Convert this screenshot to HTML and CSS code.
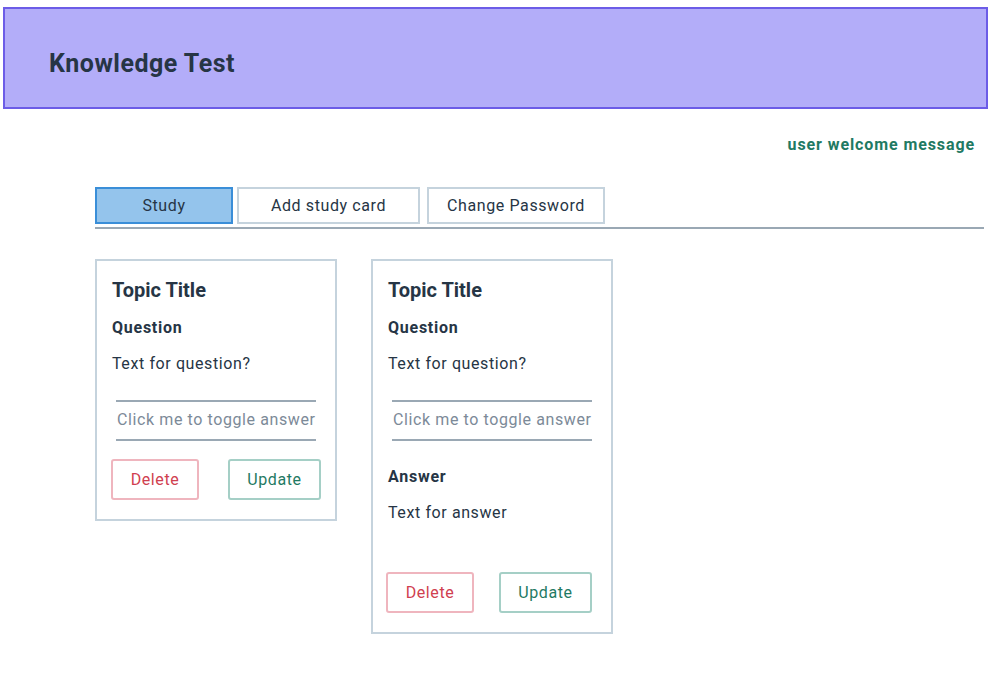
FILE: index.html
```html
<!DOCTYPE html>
<html>
<head>
<meta charset="utf-8">
<link rel="stylesheet" href="styles.css">
</head>
<body>
<header class="app-header">
  <h1 class="app-title">Knowledge Test</h1>
</header>
<div class="welcome-row">
  <span class="welcome">user welcome message</span>
</div>
<main class="main">
  <nav class="tabs">
    <button class="tab tab-active">Study</button>
    <button class="tab tab-add">Add study card</button>
    <button class="tab tab-pass">Change Password</button>
  </nav>
  <section class="cards">
    <article class="card">
      <h2 class="card-title">Topic Title</h2>
      <h3 class="label">Question</h3>
      <p class="text">Text for question?</p>
      <div class="toggle">Click me to toggle answer</div>
      <div class="actions">
        <button class="btn btn-delete">Delete</button>
        <button class="btn btn-update">Update</button>
      </div>
    </article>
    <article class="card">
      <h2 class="card-title">Topic Title</h2>
      <h3 class="label">Question</h3>
      <p class="text">Text for question?</p>
      <div class="toggle">Click me to toggle answer</div>
      <h3 class="label label-answer">Answer</h3>
      <p class="text">Text for answer</p>
      <div class="actions actions-answer">
        <button class="btn btn-delete">Delete</button>
        <button class="btn btn-update">Update</button>
      </div>
    </article>
  </section>
</main>
</body>
</html>
```
FILE: styles.css
```css
* { box-sizing: border-box; }
body {
  margin: 0;
  padding: 7px 16px 0 3px;
  font-family: Roboto, "Noto Sans", sans-serif;
  color: #263545;
  background: #fff;
  letter-spacing: 0.6px;
}
.app-header {
  height: 102px;
  background: #b3adf9;
  border: 2px solid #6c5ce7;
  display: flex;
  align-items: center;
  padding-left: 44px;
}
.app-title {
  margin: 0;
  font-size: 25px;
  font-weight: 700;
  line-height: 30px;
  letter-spacing: 0.5px;
  color: #263545;
  padding-top: 12px;
}
.welcome-row {
  display: flex;
  justify-content: flex-end;
  padding-right: 13px;
  margin-top: 26px;
  height: 20px;
}
.welcome {
  font-size: 16px;
  font-weight: 700;
  color: #1f7a63;
  line-height: 20px;
  letter-spacing: 0.9px;
}
.main {
  margin-left: 92px;
  margin-top: 32px;
}
.tabs {
  display: flex;
  gap: 5px;
  border-bottom: 2px solid #9aa8b4;
  padding-bottom: 3px;
  margin-right: 4px;
}
.tab {
  height: 37px;
  font-family: inherit;
  font-size: 16px;
  letter-spacing: 0.6px;
  color: #263545;
  background: #fff;
  border: 2px solid #c5d3dd;
  padding: 0;
}
.tab-active {
  width: 138px;
  background: #94c4ec;
  border-color: #3a8ed8;
}
.tab-add { width: 183px; margin-left: -1px; }
.tab-pass { width: 178px; margin-left: 2px; }
.cards {
  display: flex;
  align-items: flex-start;
  gap: 34px;
  margin-top: 30px;
}
.card {
  width: 242px;
  border: 2px solid #c5d3dd;
  padding: 17px 14px 19px 15px;
  display: flex;
  flex-direction: column;
}
.card-title {
  margin: 0;
  font-size: 20px;
  line-height: 24px;
  font-weight: 700;
  letter-spacing: 0;
}
.label {
  margin: 16px 0 0;
  font-size: 16px;
  line-height: 20px;
  font-weight: 700;
  letter-spacing: 0.75px;
}
.label-answer { margin-top: 26px; }
.text {
  margin: 16px 0 0;
  font-size: 16px;
  line-height: 20px;
}
.toggle {
  margin: 26px 0 0 4px;
  width: 200px;
  border-top: 2px solid #9aa8b4;
  border-bottom: 2px solid #9aa8b4;
  padding: 8px 0 9px 1px;
  font-size: 16px;
  line-height: 20px;
  color: #7c8a98;
  white-space: nowrap;
}
.actions {
  display: flex;
  justify-content: space-between;
  margin-top: 18px;
  margin-left: -1px;
}
.actions-answer { margin-top: 49px; margin-left: -2px; margin-right: 5px; }
.btn {
  height: 41px;
  font-family: inherit;
  font-size: 16px;
  letter-spacing: 0.6px;
  background: #fff;
  border: 2px solid;
  border-radius: 3px;
  padding: 0;
}
.btn-delete {
  width: 88px;
  color: #d0404f;
  border-color: #efb5be;
}
.btn-update {
  width: 93px;
  color: #1f7a63;
  border-color: #a5cfc6;
}
```
